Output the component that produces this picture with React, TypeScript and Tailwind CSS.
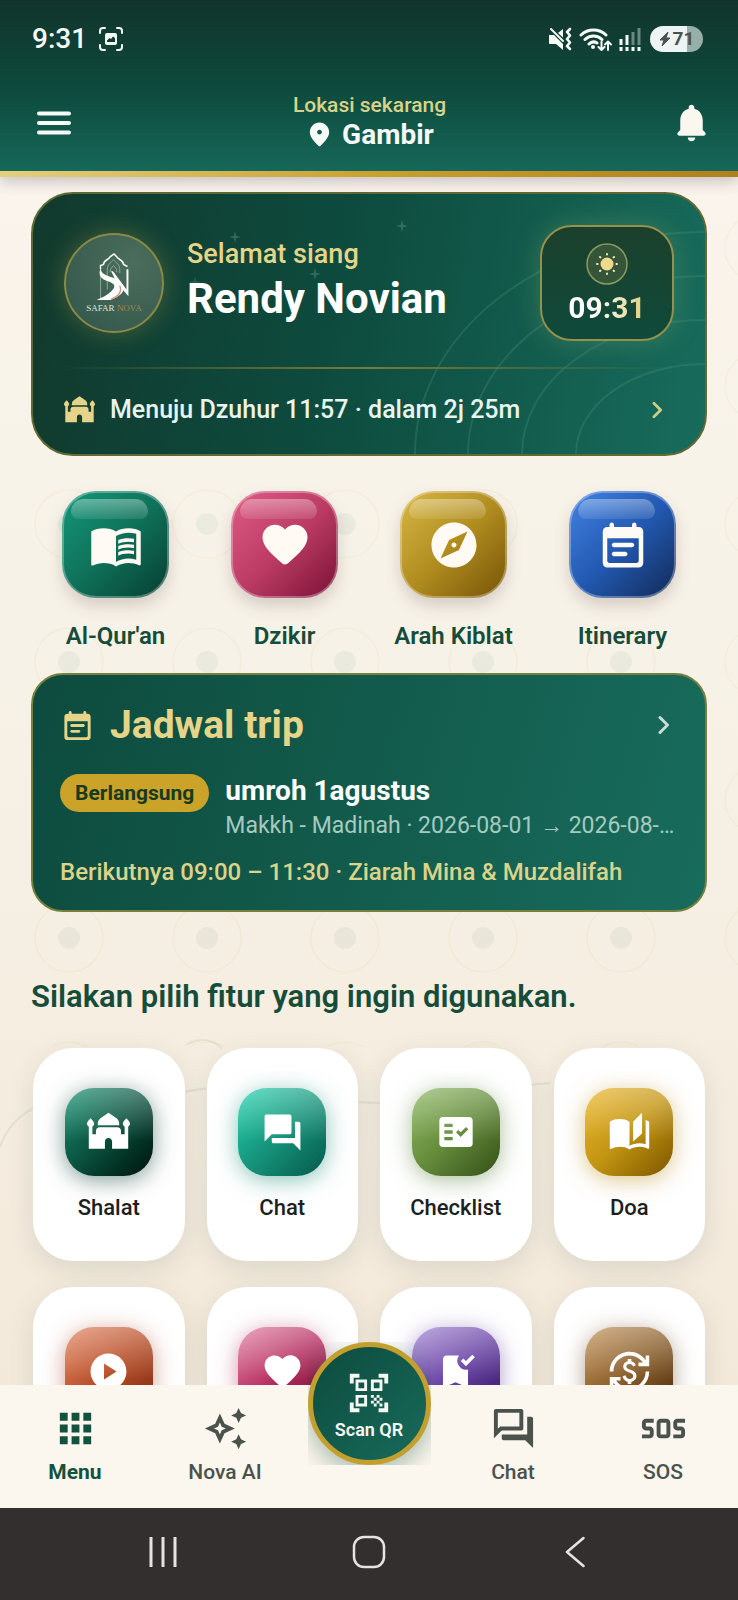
import type { ReactNode } from 'react';
import {
  MdApps,
  MdAutoStories,
  MdBookmarkAdded,
  MdCurrencyExchange,
  MdExplore,
  MdFactCheck,
  MdMenuBook,
  MdMosque,
  MdOutlineAutoAwesome,
  MdOutlineQuestionAnswer,
  MdPlayCircle,
  MdQrCodeScanner,
  MdQuestionAnswer,
  MdSos,
} from 'react-icons/md';

type PathIconProps = { d: string; className?: string };

function PathIcon({ d, className }: PathIconProps) {
  return (
    <svg viewBox="0 0 24 24" fill="currentColor" className={className} aria-hidden="true">
      <path d={d} />
    </svg>
  );
}

const BELL =
  'M12 22c1.1 0 2-.9 2-2h-4c0 1.1.89 2 2 2zm6-6v-5c0-3.07-1.64-5.64-4.5-6.32V4c0-.83-.67-1.5-1.5-1.5s-1.5.67-1.5 1.5v.68C7.63 5.36 6 7.92 6 11v5l-1.29 1.29c-.63.63-.19 1.71.7 1.71h13.17c.89 0 1.34-1.08.71-1.71L18 16z';
const PIN =
  'M12 2c-4.2 0-8 3.22-8 8.2 0 3.18 2.45 6.92 7.34 11.23.38.33.95.33 1.33 0C17.55 17.12 20 13.38 20 10.2 20 5.22 16.2 2 12 2zm0 10c-1.1 0-2-.9-2-2s.9-2 2-2 2 .9 2 2-.9 2-2 2z';
const HEART =
  'M13.35 20.13c-.76.69-1.93.69-2.69-.01l-.11-.1C5.3 15.27 1.87 12.16 2 8.28c.06-1.7.93-3.33 2.34-4.29 2.64-1.8 5.9-.96 7.66 1.1 1.76-2.06 5.02-2.91 7.66-1.1 1.41.96 2.28 2.59 2.34 4.29.14 3.88-3.3 6.99-8.55 11.76l-.1.09z';
const NOTE =
  'M19 4h-1V3c0-.55-.45-1-1-1s-1 .45-1 1v1H8V3c0-.55-.45-1-1-1s-1 .45-1 1v1H5c-1.11 0-1.99.9-1.99 2L3 20c0 1.1.89 2 2 2h14c1.1 0 2-.9 2-2V6c0-1.1-.9-2-2-2zm0 15c0 .55-.45 1-1 1H6c-.55 0-1-.45-1-1V9h14v10zM8 11h8c.55 0 1 .45 1 1s-.45 1-1 1H8c-.55 0-1-.45-1-1s.45-1 1-1zm0 4h5c.55 0 1 .45 1 1s-.45 1-1 1H8c-.55 0-1-.45-1-1s.45-1 1-1z';

function Chevron({ className }: { className?: string }) {
  return (
    <svg viewBox="0 0 12 20" fill="none" stroke="currentColor" strokeWidth="3" strokeLinecap="round" strokeLinejoin="round" className={className} aria-hidden="true">
      <path d="M2 2.5 9.5 10 2 17.5" />
    </svg>
  );
}

function StatusBar() {
  return (
    <div className="flex h-[78px] items-center justify-between pr-[35px] pl-8">
      <div className="flex items-center gap-3">
        <span className="text-[28px] leading-8 font-medium">9:31</span>
        <svg viewBox="0 0 24 24" className="size-6" fill="none" stroke="currentColor" strokeWidth="2" strokeLinecap="round" aria-hidden="true">
          <path d="M1 6V4a3 3 0 0 1 3-3h2M18 1h2a3 3 0 0 1 3 3v2M23 18v2a3 3 0 0 1-3 3h-2M6 23H4a3 3 0 0 1-3-3v-2" />
          <path fill="currentColor" stroke="none" fillRule="evenodd" d="M8 6h8a2 2 0 0 1 2 2v8a2 2 0 0 1-2 2H8a2 2 0 0 1-2-2V8a2 2 0 0 1 2-2Zm0 9h8v-4l-2-1.500-2 2.500-1.500-1L8 13.500Z" />
        </svg>
      </div>
      <div className="flex items-center gap-[7px]">
        <svg viewBox="0 0 24 24" className="size-6" fill="none" stroke="currentColor" aria-hidden="true">
          <path fill="currentColor" stroke="none" d="M1 8h5l9 9v6l-7-6H2a1 1 0 0 1-1-1Zm9-2 5-4v8.500Z" />
          <path strokeWidth="2" strokeLinecap="round" d="m3 2 12 12" />
          <path strokeWidth="2.600" strokeLinecap="round" strokeLinejoin="round" d="m22 2-3 3 3 3.500-3 3.500 3 3.500-3 3.500 3 3" />
        </svg>
        <svg viewBox="0 0 33 25" className="h-[25px] w-[33px]" fill="none" stroke="currentColor" strokeWidth="3" strokeLinecap="round" aria-hidden="true">
          <path d="M2 8a18 18 0 0 1 25 0M6 12.500a12 12 0 0 1 17 0M10 17a6.500 6.500 0 0 1 8-1" />
          <circle cx="14" cy="20" r="2" fill="currentColor" stroke="none" />
          <path strokeWidth="2" strokeLinejoin="round" d="M22.500 14.500V23m-3-3 3 3 3-3M29 23v-8.500m-3 3 3-3 3 3" />
        </svg>
        <svg viewBox="0 0 22 24" className="h-6 w-[22px]" fill="none" stroke="currentColor" strokeWidth="3" aria-hidden="true">
          <path d="M2 12v6M8 8v10" />
          <path className="opacity-40" d="M14 5v13M20 1v17" />
          <path d="M2 20v4M8 20v4M14 20v4M20 20v4" />
        </svg>
        <div className="ml-[2px] flex h-[26px] w-[53px] items-center justify-center gap-[2px] rounded-full bg-linear-to-r from-[#eef3f3] from-70% to-[#98aea9] to-70% text-[#4b5252]">
          <svg viewBox="0 0 12 16" className="h-4 w-3" fill="currentColor" aria-hidden="true">
            <path d="M9 1 1 9h4l-2 6 8-8H7Z" stroke="currentColor" strokeLinejoin="round" />
          </svg>
          <span className="text-[19px] leading-6 font-bold">71</span>
        </div>
      </div>
    </div>
  );
}

function Header() {
  return (
    <header className="relative z-10 bg-linear-to-b from-[#11342b] via-[#0d4a3d] to-[#176a5b] text-[#f6fbf8] shadow-[0_4px_14px_rgba(60,50,70,0.28)]">
      <StatusBar />
      <div className="grid h-[93px] grid-cols-[1fr_auto_1fr] items-center pr-6 pb-1 pl-[37px]">
        <button type="button" aria-label="Buka menu" className="w-12">
          <svg viewBox="0 0 34 24" className="h-6 w-[34px]" stroke="currentColor" strokeWidth="4" strokeLinecap="round" aria-hidden="true">
            <path d="M2 2.500h30M2 12h30M2 21.500h30" />
          </svg>
        </button>
        <div className="flex flex-col items-center pr-3">
          <span className="text-[21px] leading-6 font-medium text-[#d9d38a]">Lokasi sekarang</span>
          <span className="flex items-center gap-2 text-[28px] leading-9 font-bold">
            <PathIcon d={PIN} className="size-[29px]" />
            Gambir
          </span>
        </div>
        <button type="button" aria-label="Notifikasi" className="justify-self-end text-[#faf7ef]">
          <PathIcon d={BELL} className="size-[45px]" />
        </button>
      </div>
      <div className="h-[6px] bg-linear-to-r from-[#e3cf7d] via-[#c9a22f] to-[#b0801c]" />
    </header>
  );
}

function SafarLogo() {
  return (
    <div className="flex size-[100px] shrink-0 flex-col items-center justify-center rounded-full border-2 border-[#8a8a44] bg-[radial-gradient(circle_at_70%_30%,#4b6d5c,#30554a)] shadow-[0_0_26px_rgba(205,180,80,0.3)]">
      <svg viewBox="0 0 36 52" className="h-[50px] w-9" fill="none" aria-hidden="true">
        <path stroke="#f5f8f6" strokeWidth="1.600" d="M4 17v-4l3-1c0-5 6-5 7-8l4-3 3 3c1 3 7 3 7 8l4 2" />
        <path stroke="#a9b8a6" strokeWidth=".8" d="M4 17v30M11 38V17c0-5 4-7 6.500-10C20 10 24 12 24 17v4M14 20c0-4 2-5 3.500-7 1.500 2 3.500 3 3.500 7" />
        <path fill="#fff" d="M4 16c-3 7 1 11 7 13 9 3 9 6 4 11-4 4-9 6-15 9h14c6-2 13-6 14-11 1-6-5-9-10-12C8 23 5 21 4 16Z" />
        <path fill="#fff" d="M15 19h2l14 19V17h2v28L21 31c-2-4-4-8-6-12Z" />
        <path stroke="#d69483" strokeWidth="1.400" d="M24 34c3 7-2 11-9 14" />
      </svg>
      <p className="font-['Liberation_Serif',serif] text-[9px] leading-[10px] text-[#dfe5dc]">
        SAFAR <span className="text-[#9a8a55]">NOVA</span>
      </p>
    </div>
  );
}

function Sparkle({ className }: { className: string }) {
  return (
    <svg viewBox="0 0 12 12" className={className} fill="#7fb8a0" aria-hidden="true">
      <path d="M6 0 7.200 4.800 12 6 7.200 7.200 6 12 4.800 7.200 0 6 4.800 4.800Z" />
    </svg>
  );
}

function Hero() {
  return (
    <section className="relative overflow-hidden rounded-[42px] border-2 border-[#5f6a35] bg-linear-[100deg] from-[#12392d] via-[#0d4b3e] via-45% to-[#186c5c] bg-origin-border px-[31px] pt-[31px] pb-[27px] text-white">
      <svg viewBox="0 0 300 230" className="absolute right-0 bottom-0 h-[230px] w-[300px]" fill="none" stroke="#5fa58e" strokeOpacity=".22" strokeWidth="2" aria-hidden="true">
        <ellipse cx="300" cy="230" rx="129" ry="90" />
        <ellipse cx="300" cy="230" rx="183" ry="134" />
        <ellipse cx="300" cy="230" rx="237" ry="178" />
        <ellipse cx="300" cy="230" rx="290" ry="222" />
      </svg>
      <Sparkle className="absolute top-[37px] left-[196px] size-3 opacity-30" />
      <Sparkle className="absolute top-[74px] left-[276px] size-3 opacity-30" />
      <Sparkle className="absolute top-[26px] left-[363px] size-3 opacity-30" />
      <Sparkle className="absolute top-[82px] left-[156px] size-3 opacity-20" />
      <div className="relative flex items-center">
        <SafarLogo />
        <div className="ml-[23px] min-w-0 flex-1 pb-1">
          <p className="mb-1 text-[27px] leading-8 font-medium text-[#e6d589]">Selamat siang</p>
          <h1 className="text-[42px] leading-[50px] font-bold">Rendy Novian</h1>
        </div>
        <div className="flex h-[116px] w-[134px] flex-col items-center justify-center gap-1 rounded-[32px] border-2 border-[#95914a] bg-linear-to-b from-[#1b402c] to-[#0e4a3b] pt-1 shadow-[0_0_28px_rgba(150,190,120,0.28)]">
          <svg viewBox="0 0 42 42" className="size-[42px]" aria-hidden="true">
            <circle cx="21" cy="21" r="20" fill="#355538" stroke="#8c9a62" strokeWidth="1.500" />
            <circle cx="21" cy="21" r="6.500" fill="#f0d98a" />
            <path stroke="#f6e9b8" strokeWidth="2" strokeLinecap="round" d="M21 11v.6M21 30.400v.6M11 21h.6M30.400 21h.6M14 14l.4.4M27.600 27.600l.4.400M14 28l.4-.4M27.600 14.400l.4-.4" />
          </svg>
          <time className="bg-linear-to-r from-white from-30% to-[#e3cd78] bg-clip-text text-[30px] leading-[38px] font-bold text-transparent">09:31</time>
        </div>
      </div>
      <div className="relative mt-[26px] h-[2px] bg-linear-to-r from-transparent via-[#7c7a35] to-transparent" />
      <a href="#shalat" className="relative mt-6 flex items-center">
        <MdMosque className="size-[31px] text-[#e6d589]" aria-hidden="true" />
        <span className="ml-[15px] flex-1 text-[25px] leading-[34px] font-medium text-[#e8f4ee]">Menuju Dzuhur 11:57 · dalam 2j 25m</span>
        <Chevron className="mr-[11px] h-[18px] w-[11px] text-[#c9cf86]" />
      </a>
    </section>
  );
}

type Quick = { label: string; tile: string; icon: ReactNode };

const quickLinks: Quick[] = [
  { label: "Al-Qur'an", tile: 'from-[#14987a] via-[#0f7159] to-[#073e31]', icon: <MdMenuBook className="size-[54px]" /> },
  { label: 'Dzikir', tile: 'from-[#dc5c86] via-[#bd3c66] to-[#7a0f35]', icon: <PathIcon d={HEART} className="size-[54px]" /> },
  { label: 'Arah Kiblat', tile: 'from-[#d8b843] via-[#b18d20] to-[#765406]', icon: <MdExplore className="size-[54px]" /> },
  { label: 'Itinerary', tile: 'from-[#4483e4] via-[#2259b2] to-[#122a57]', icon: <PathIcon d={NOTE} className="size-[54px]" /> },
];

function QuickLinks() {
  return (
    <nav aria-label="Pintasan" className="mt-[35px] grid grid-cols-4">
      {quickLinks.map((q) => (
        <a key={q.label} href={'#' + q.label} className="flex flex-col items-center gap-[22px]">
          <span className={`relative flex size-[107px] items-center justify-center rounded-[34px] border-2 border-white/30 bg-linear-135 bg-origin-border text-[#fffaf3] shadow-[0_8px_16px_rgba(80,60,60,0.2)] ${q.tile}`}>
            <span className="absolute top-[6px] right-[19px] left-[7px] h-5 rounded-t-[20px] rounded-b-[12px] bg-linear-to-b from-white/35 to-white/10" />
            {q.icon}
          </span>
          <span className="text-[24px] leading-8 font-semibold whitespace-nowrap text-[#154c3a]">{q.label}</span>
        </a>
      ))}
    </nav>
  );
}

function TripCard() {
  return (
    <section className="mt-[21px] rounded-[32px] border-2 border-[#75803f] bg-linear-[105deg] from-[#0d4b3d] to-[#186c5c] bg-origin-border px-[27px] pt-7 pb-[22px]">
      <a href="#trip" className="flex items-center text-[#e6d589]">
        <PathIcon d={NOTE} className="size-[35px]" />
        <h2 className="ml-[15px] flex-1 text-[39px] leading-[44px] font-bold">Jadwal trip</h2>
        <Chevron className="mr-2 h-5 w-3 text-[#c8ded6]" />
      </a>
      <div className="mt-[23px] flex items-start gap-4">
        <span className="mt-1 rounded-full bg-[#cba328] px-[15px] py-[7px] text-[21px] leading-6 font-bold text-[#173a22]">Berlangsung</span>
        <div className="min-w-0 flex-1">
          <h3 className="text-[28px] leading-[42px] font-bold text-white">umroh 1agustus</h3>
          <p className="truncate text-[23px] leading-7 text-[#a5cabf]">Makkh - Madinah · 2026-08-01 → 2026-08-10</p>
        </div>
      </div>
      <p className="mt-4 text-[24px] leading-8 font-medium text-[#dcd38b]">Berikutnya 09:00 – 11:30 · Ziarah Mina &amp; Muzdalifah</p>
    </section>
  );
}

type Feature = { id: string; label?: string; tile: string; icon: ReactNode };

const features: Feature[] = [
  { id: 'shalat', label: 'Shalat', tile: 'from-[#149373] via-[#0b513e] to-[#00140d] shadow-[0_4px_22px_rgba(5,60,45,0.5)]', icon: <MdMosque className="size-[43px]" /> },
  { id: 'chat', label: 'Chat', tile: 'from-[#22d3ae] via-[#16947c] to-[#06594a] shadow-[0_4px_22px_rgba(20,140,115,0.5)]', icon: <MdQuestionAnswer className="size-[43px]" /> },
  { id: 'checklist', label: 'Checklist', tile: 'from-[#8eb862] via-[#658c3b] to-[#345018] shadow-[0_4px_22px_rgba(90,130,60,0.5)]', icon: <MdFactCheck className="size-[40px]" /> },
  { id: 'doa', label: 'Doa', tile: 'from-[#ecb62a] via-[#c29512] to-[#7d5600] shadow-[0_4px_22px_rgba(190,145,30,0.5)]', icon: <MdAutoStories className="size-[43px]" /> },
  { id: 'video', tile: 'from-[#e08460] via-[#b84f29] to-[#7d2b10] shadow-[0_4px_22px_rgba(170,70,40,0.5)]', icon: <MdPlayCircle className="size-[43px]" /> },
  { id: 'favorit', tile: 'from-[#e07ca0] via-[#b62f62] to-[#6d0c30] shadow-[0_4px_22px_rgba(170,50,90,0.5)]', icon: <PathIcon d={HEART} className="size-[43px]" /> },
  { id: 'tersimpan', tile: 'from-[#a184d0] via-[#6a43a4] to-[#361667] shadow-[0_4px_22px_rgba(90,60,150,0.5)]', icon: <MdBookmarkAdded className="size-[43px]" /> },
  { id: 'kurs', tile: 'from-[#c09258] via-[#8c602d] to-[#4c2d0c] shadow-[0_4px_22px_rgba(110,75,40,0.5)]', icon: <MdCurrencyExchange className="size-[43px]" /> },
];

function FeatureGrid() {
  return (
    <section className="mt-[63px]">
      <h2 className="text-[31px] leading-[44px] font-semibold text-[#154c3a]">Silakan pilih fitur yang ingin digunakan.</h2>
      <div className="mt-[29px] grid grid-cols-4 gap-x-[22px] gap-y-[26px] px-[2px]">
        {features.map((f) => (
          <a key={f.id} href={'#' + f.id} aria-label={f.label ?? f.id} className="flex h-[213px] flex-col items-center rounded-[40px] bg-white pt-10 shadow-[0_8px_26px_rgba(70,95,75,0.14)]">
            <span className={`flex size-[88px] items-center justify-center rounded-[29px] bg-linear-135 text-white ${f.tile}`}>
              <span className="flex size-full items-center justify-center rounded-[29px] bg-linear-to-b from-white/30 to-transparent to-60%">{f.icon}</span>
            </span>
            {f.label && <span className="mt-4 text-[22px] leading-8 font-medium text-[#1c1f1d]">{f.label}</span>}
          </a>
        ))}
      </div>
    </section>
  );
}

function BackgroundPattern() {
  return (
    <svg className="absolute inset-0 size-full" aria-hidden="true">
      <defs>
        <pattern id="rosette" width="138" height="138" patternUnits="userSpaceOnUse">
          <circle cx="69" cy="71" r="11" fill="#4c8068" fillOpacity=".07" />
          <circle cx="69" cy="71" r="34" fill="none" stroke="#c9a050" strokeOpacity=".08" strokeWidth="1.500" />
        </pattern>
      </defs>
      <rect width="100%" height="870" fill="url(#rosette)" />
      <path d="M0 970C10 940 35 925 75 918M186 868c14-8 28-6 36 4M180 916c60-14 120 0 170 8s120-12 200-18" fill="none" stroke="#6b8a70" strokeOpacity=".12" strokeWidth="2" />
    </svg>
  );
}

function BottomNav() {
  const item = 'flex flex-1 flex-col items-center gap-[6px] text-[21px] leading-7';
  return (
    <nav aria-label="Navigasi utama" className="relative z-10 flex h-[123px] bg-[#fbf6ee] pt-5">
      <a href="#menu" className={`${item} font-bold text-[#12523f]`}>
        <MdApps className="size-[47px]" aria-hidden="true" />
        Menu
      </a>
      <a href="#nova" className={`${item} font-medium text-[#4a524c]`}>
        <MdOutlineAutoAwesome className="size-[47px] p-px" aria-hidden="true" />
        Nova AI
      </a>
      <div className="w-[138px] shrink-0" />
      <a href="#chat" className={`${item} font-medium text-[#4a524c]`}>
        <MdOutlineQuestionAnswer className="size-[47px]" aria-hidden="true" />
        Chat
      </a>
      <a href="#sos" className={`${item} font-medium text-[#4a524c]`}>
        <MdSos className="size-[47px]" aria-hidden="true" />
        SOS
      </a>
      <div className="absolute inset-x-0 -top-[43px] mx-auto size-[123px] overflow-hidden">
        <button type="button" className="flex size-full flex-col items-center justify-center rounded-full border-[5px] border-[#c3a02e] bg-linear-to-br from-[#0d4a3d] to-[#186c5c] bg-origin-border pt-1 text-[#f6f8f2] shadow-[0_8px_24px_rgba(13,74,61,0.35)]">
          <MdQrCodeScanner className="size-[46px]" aria-hidden="true" />
          <span className="mt-[2px] text-[18px] leading-6 font-semibold whitespace-nowrap">Scan QR</span>
        </button>
      </div>
    </nav>
  );
}

function SystemNav() {
  return (
    <div className="flex h-[92px] items-center justify-center bg-[#322f2e] pb-1 text-[#e6e3e1]">
      <button type="button" aria-label="Aplikasi terbaru" className="flex w-[206px] justify-center">
        <svg viewBox="0 0 30 30" className="size-[30px]" stroke="currentColor" strokeWidth="3" aria-hidden="true">
          <path d="M3 0v30M15 0v30M27 0v30" />
        </svg>
      </button>
      <button type="button" aria-label="Beranda" className="flex w-[206px] justify-center">
        <svg viewBox="0 0 34 34" className="size-[34px]" fill="none" stroke="currentColor" strokeWidth="2.500" aria-hidden="true">
          <rect x="2" y="2" width="30" height="30" rx="10" />
        </svg>
      </button>
      <button type="button" aria-label="Kembali" className="flex w-[206px] justify-center">
        <svg viewBox="0 0 20 32" className="h-8 w-5" fill="none" stroke="currentColor" strokeWidth="2.500" strokeLinecap="round" strokeLinejoin="round" aria-hidden="true">
          <path d="M18.500 2 2 16l16.500 14" />
        </svg>
      </button>
    </div>
  );
}

export default function App() {
  return (
    <div className="flex h-screen flex-col overflow-hidden bg-linear-to-b from-[#fbf5ee] via-[#f7f2e7] via-40% to-[#f2e7d7] font-['Roboto',sans-serif]">
      <Header />
      <main className="relative min-h-0 flex-1 overflow-y-auto [scrollbar-width:none]">
        <BackgroundPattern />
        <div className="relative px-[31px] pt-[15px] pb-10">
          <Hero />
          <QuickLinks />
          <TripCard />
          <FeatureGrid />
        </div>
      </main>
      <BottomNav />
      <SystemNav />
    </div>
  );
}
